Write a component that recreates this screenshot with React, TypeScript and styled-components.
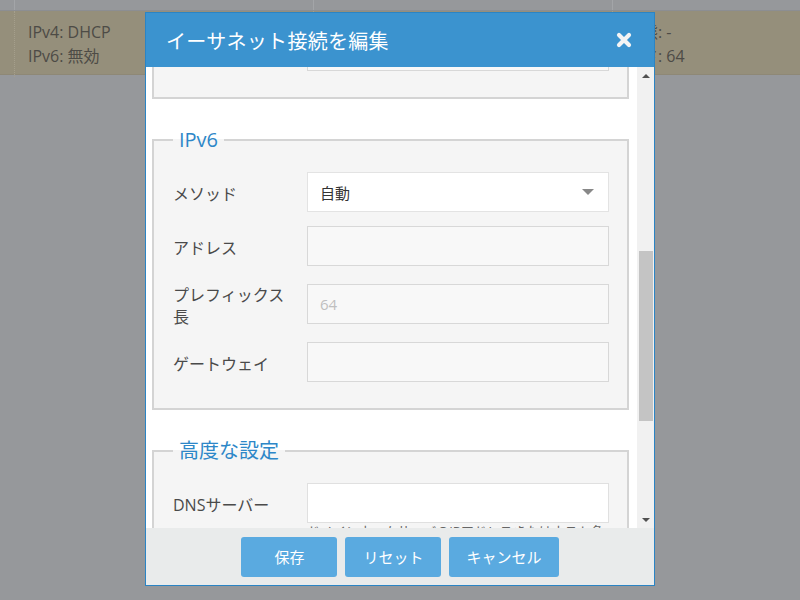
import React, { useLayoutEffect, useRef } from 'react'
import styled, { createGlobalStyle } from 'styled-components'

const FONT = '"Open Sans", "Noto Sans CJK JP", sans-serif'

const Global = createGlobalStyle`
  html, body { margin: 0; padding: 0; }
  body {
    width: 800px;
    height: 600px;
    overflow: hidden;
    background: #96989b;
    font-family: ${FONT};
  }
  * { box-sizing: border-box; }
`

// ---- dimmed page behind the dialog ----
const Backdrop = styled.div`
  position: relative;
  width: 800px;
  height: 600px;
  background: #96989b;
  overflow: hidden;
`

const HeadRow = styled.div`
  display: grid;
  grid-template-columns: 14px 299px 299px 1fr;
  height: 11px;
  border-bottom: 1px solid #8c8e92;
`

const HeadCell = styled.div`
  border-left: 1px solid #a3a5a8;
  &:first-child { border-left: none; }
`

const DataRow = styled.div`
  display: grid;
  grid-template-columns: 14px 299px 299px 1fr;
  height: 64px;
  background: #958f7b;
  border-bottom: 1px solid #8e8876;
`

const DataCell = styled.div`
  border-left: 1px dotted #a59f8c;
  padding: 9px 13px;
  font-size: 16px;
  line-height: 24px;
  color: #4d4b46;
  white-space: nowrap;
  &:first-child { border-left: none; }
`

// ---- dialog ----
const Dialog = styled.div`
  position: absolute;
  left: 145px;
  top: 12px;
  width: 510px;
  height: 574px;
  border: 1px solid #2b84c4;
  background: #fff;
  display: flex;
  flex-direction: column;
`

const Header = styled.div`
  height: 54px;
  flex: none;
  background: #3b93cf;
  display: flex;
  align-items: center;
  justify-content: space-between;
  padding: 0 22px 0 20px;
`

const Title = styled.h1`
  margin: 0;
  font-size: 20px;
  font-weight: 400;
  color: #fff;
  letter-spacing: 0.3px;
`

const Close = styled.button`
  border: none;
  background: none;
  padding: 0;
  display: flex;
  cursor: pointer;
`

const Body = styled.div`
  flex: 1;
  min-height: 0;
  display: flex;
`

const Viewport = styled.div`
  position: relative;
  flex: 1;
  overflow: hidden;
  padding: 20px 8px 0 6px;
`

const ScrollBar = styled.div`
  position: relative;
  width: 17px;
  flex: none;
  background: #f1f1f1;
  display: flex;
  flex-direction: column;
  justify-content: space-between;
  align-items: center;
  padding: 7px 0 6px 1px;
`

const Arrow = styled.span<{ $down?: boolean }>`
  width: 0;
  height: 0;
  border-left: 4px solid transparent;
  border-right: 4px solid transparent;
  ${p => (p.$down ? 'border-top: 4px solid #505050;' : 'border-bottom: 4px solid #505050;')}
`

const Thumb = styled.div`
  position: absolute;
  left: 2px;
  right: 1px;
  top: 184px;
  height: 170px;
  background: #c4c4c4;
`

const Section = styled.fieldset`
  margin: 0 0 27px;
  padding: 18px 18px 26px 19px;
  border: 2px solid #d4d4d4;
  background: #f5f5f5;
  min-width: 0;
`

const Legend = styled.legend`
  padding: 0 6px;
  font-size: 20px;
  line-height: 28px;
  color: #2d87c8;
`

const Field = styled.div`
  display: grid;
  grid-template-columns: 124px 1fr;
  column-gap: 10px;
  align-items: center;
  & + & { margin-top: 14px; }
`

const Label = styled.label`
  font-size: 16px;
  line-height: 22px;
  padding-top: 4px;
  color: #4a4a4a;
`

const TextInput = styled.input<{ $white?: boolean }>`
  width: 100%;
  height: 40px;
  margin: 0;
  border: 1px solid ${p => (p.$white ? '#e0e0e0' : '#d8d8d8')};
  background: ${p => (p.$white ? '#fff' : '#f8f8f8')};
  padding: 0 12px;
  font-family: ${FONT};
  font-size: 15px;
  color: #444;
  outline: none;
  &::placeholder { color: #bfbfbf; }
`

const SelectBox = styled.div`
  height: 40px;
  border: 1px solid #e3e3e3;
  background: #fff;
  padding: 0 14px 0 12px;
  display: flex;
  align-items: center;
  justify-content: space-between;
  font-size: 15px;
  color: #333;
`

const Caret = styled.span`
  width: 0;
  height: 0;
  border-left: 6px solid transparent;
  border-right: 6px solid transparent;
  border-top: 6px solid #888;
`

const Hint = styled.div`
  grid-column: 2;
  margin-top: 0;
  font-size: 13px;
  line-height: 16px;
  color: #666;
  white-space: nowrap;
`

const Footer = styled.div`
  height: 57px;
  flex: none;
  background: #e9ebeb;
  display: flex;
  align-items: center;
  justify-content: center;
  gap: 8px;
`

const Button = styled.button`
  height: 40px;
  min-width: 96px;
  padding: 0 17px;
  border: none;
  border-radius: 3px;
  background: #5aaae0;
  color: #fff;
  font-family: ${FONT};
  font-size: 15px;
  cursor: pointer;
`

type Row = { label: string; kind: 'select' | 'input' | 'white'; value?: string; placeholder?: string }

const ipRows = (method: string): Row[] => [
  { label: 'メソッド', kind: 'select', value: method },
  { label: 'アドレス', kind: 'input' },
  { label: 'プレフィックス長', kind: 'input', placeholder: '64' },
  { label: 'ゲートウェイ', kind: 'input' },
]

function Fields({ rows }: { rows: Row[] }) {
  return (
    <>
      {rows.map(r => (
        <Field key={r.label}>
          <Label>{r.label}</Label>
          {r.kind === 'select' ? (
            <SelectBox>
              <span>{r.value}</span>
              <Caret />
            </SelectBox>
          ) : (
            <TextInput readOnly $white={r.kind === 'white'} placeholder={r.placeholder} defaultValue={r.value} />
          )}
        </Field>
      ))}
    </>
  )
}

function CloseIcon() {
  return (
    <svg width="16" height="16" viewBox="0 0 16 16">
      <path d="M3 3 L13 13 M13 3 L3 13" stroke="#f4f4f4" strokeWidth="4.2" strokeLinecap="round" />
    </svg>
  )
}

export default function App() {
  const viewRef = useRef<HTMLDivElement>(null)
  const ipv6Ref = useRef<HTMLFieldSetElement>(null)

  // scroll the form so the IPv6 section sits where the screenshot shows it
  useLayoutEffect(() => {
    if (viewRef.current && ipv6Ref.current) {
      viewRef.current.scrollTop = ipv6Ref.current.offsetTop - 59
    }
  }, [])

  return (
    <Backdrop>
      <Global />
      <HeadRow>
        <HeadCell />
        <HeadCell />
        <HeadCell />
        <HeadCell />
      </HeadRow>
      <DataRow>
        <DataCell />
        <DataCell>
          IPv4: DHCP
          <br />
          IPv6: 無効
        </DataCell>
        <DataCell />
        <DataCell>
          状態: -
          <br />
          長さ: 64
        </DataCell>
      </DataRow>

      <Dialog>
        <Header>
          <Title>イーサネット接続を編集</Title>
          <Close aria-label="閉じる">
            <CloseIcon />
          </Close>
        </Header>
        <Body>
          <Viewport ref={viewRef}>
            <Section>
              <Legend>一般</Legend>
              <Fields
                rows={[
                  { label: '名前', kind: 'white', value: 'eth0' },
                  { label: 'インターフェース', kind: 'select', value: 'eth0' },
                ]}
              />
            </Section>
            <Section>
              <Legend>IPv4</Legend>
              <Fields rows={ipRows('DHCP')} />
            </Section>
            <Section ref={ipv6Ref}>
              <Legend>IPv6</Legend>
              <Fields rows={ipRows('自動')} />
            </Section>
            <Section>
              <Legend>高度な設定</Legend>
              <Field>
                <Label>DNSサーバー</Label>
                <TextInput readOnly $white />
                <Hint>ドメインネームサーバのIPアドレスまたはホスト名</Hint>
              </Field>
              <Field>
                <Label>検索ドメイン</Label>
                <TextInput readOnly $white />
              </Field>
              <Field>
                <Label>MTU</Label>
                <TextInput readOnly $white />
              </Field>
            </Section>
          </Viewport>
          <ScrollBar>
            <Arrow />
            <Thumb />
            <Arrow $down />
          </ScrollBar>
        </Body>
        <Footer>
          <Button>保存</Button>
          <Button>リセット</Button>
          <Button>キャンセル</Button>
        </Footer>
      </Dialog>
    </Backdrop>
  )
}
